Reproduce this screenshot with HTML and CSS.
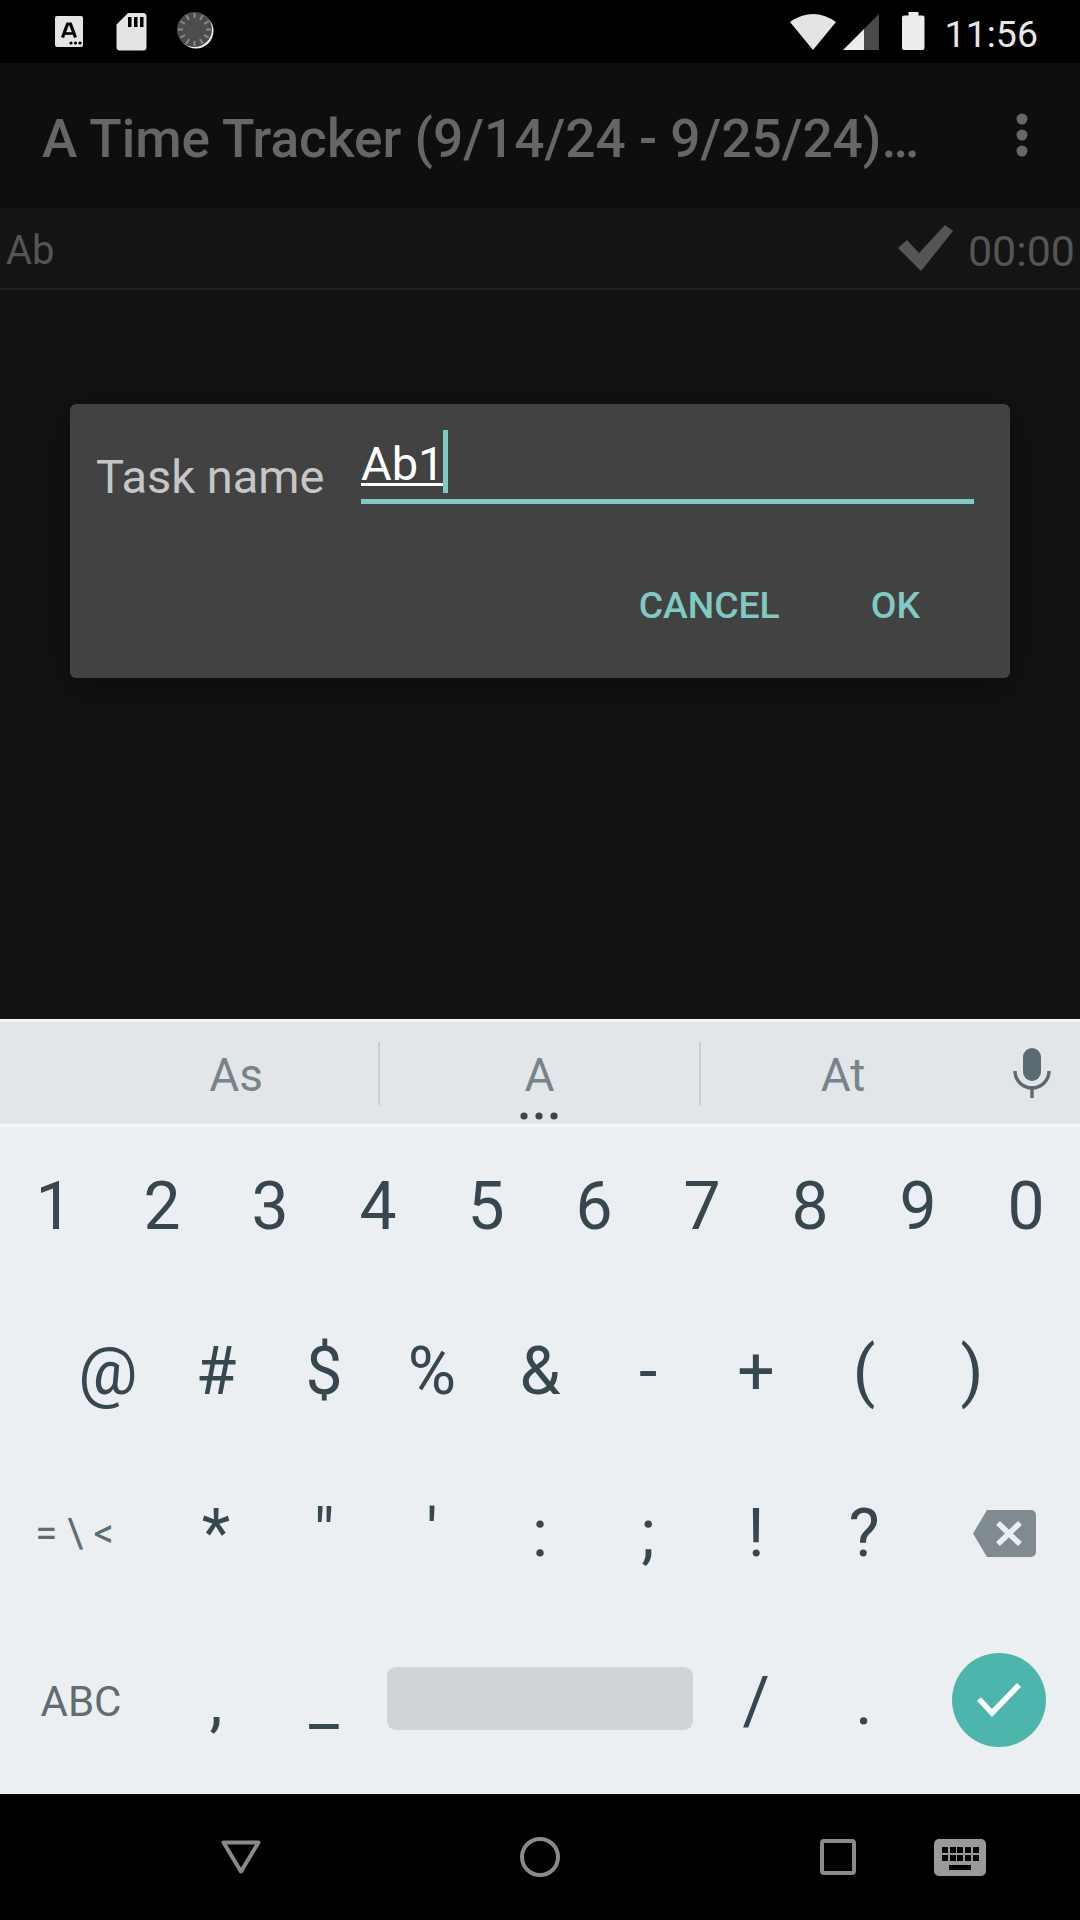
FILE: index.html
```html
<!DOCTYPE html>
<html lang="en">
<head>
<meta charset="utf-8">
<title>A Time Tracker</title>
<link rel="stylesheet" href="styles.css">
</head>
<body>
<div class="screen">
  <header class="status">
    <div class="status-left">
      <svg class="ic-a" width="28" height="31" viewBox="0 0 28 31"><rect width="28" height="31" rx="2" fill="#e4e4e4"/><path d="M7.500 21.500 L12.500 8 h3 L20.500 21.500" fill="none" stroke="#000" stroke-width="3.200"/><path d="M10 17.500 h8" stroke="#000" stroke-width="2.600"/><circle cx="16" cy="27" r="1.600" fill="#000"/><circle cx="20.500" cy="27" r="1.600" fill="#000"/><circle cx="25" cy="27" r="1.600" fill="#000"/></svg>
      <svg class="ic-sd" width="31" height="38" viewBox="0 0 31 38"><path d="M12 0 H27 a3.500 3.500 0 0 1 3.500 3.500 V34 a3.500 3.500 0 0 1 -3.500 3.500 H4 a3.500 3.500 0 0 1 -3.500 -3.500 V11.500 Z" fill="#e4e4e4"/><path d="M12 4 h3.500 v10 h-3.500 z M18 4 h3.500 v10 h-3.500 z M24 4 h3.500 v10 h-3.500 z" fill="#000"/></svg>
      <svg class="ic-spin" width="38" height="38" viewBox="0 0 38 38"><circle cx="19" cy="19" r="17.500" fill="#f0f0f0"/><circle cx="17.500" cy="17.500" r="17.500" fill="#4c4c4c"/><g stroke="#8a8a8a" stroke-width="2"><path d="M17.500 1 V6"/><path d="M17.500 29 V34"/><path d="M1 17.500 H6"/><path d="M29 17.500 H34"/><path d="M25.700 3.300 L23 8"/><path d="M9.300 3.300 L12 8"/><path d="M3.300 9.300 L8 12"/><path d="M31.700 9.300 L27 12"/><path d="M3.300 25.700 L8 23"/><path d="M31.700 25.700 L27 23"/><path d="M9.300 31.700 L12 27"/><path d="M25.700 31.700 L23 27"/></g></svg>
    </div>
    <div class="status-right">
      <svg class="ic-wifi" width="46" height="37" viewBox="0 0 46 37"><path d="M0 9 Q23 -7 46 9 L23 37 Z" fill="#e4e4e4"/></svg>
      <svg class="ic-signal" width="36" height="36" viewBox="0 0 36 36"><path d="M36 0 V36 H21 V15 Z" fill="#4a4a4a"/><path d="M21 15 V36 H0 Z" fill="#ececec"/></svg>
      <svg class="ic-batt" width="23" height="38" viewBox="0 0 23 38"><path d="M6.500 0 h10 v3.500 h4 a2 2 0 0 1 2 2 V36 a2 2 0 0 1 -2 2 H2 a2 2 0 0 1 -2 -2 V5.500 a2 2 0 0 1 2 -2 h4.500 Z" fill="#ececec"/></svg>
      <span class="clock">11:56</span>
    </div>
  </header>

  <div class="appbar">
    <h1 class="title">A Time Tracker (9/14/24 - 9/25/24)…</h1>
    <svg class="ic-more" width="12" height="44" viewBox="0 0 12 44"><circle cx="6" cy="6" r="5.500" fill="#666"/><circle cx="6" cy="22" r="5.500" fill="#666"/><circle cx="6" cy="38" r="5.500" fill="#666"/></svg>
  </div>

  <div class="task-row">
    <span class="task-name">Ab</span>
    <svg class="ic-check" width="56" height="47" viewBox="0 0 56 47"><path d="M0 23 L9 15 L21 28 L47 0 L55 6 L23 46 Z" fill="#555"/></svg>
    <span class="task-time">00:00</span>
  </div>

  <main class="content">
    <section class="dialog">
      <div class="dialog-body">
        <label class="field-label">Task name</label>
        <div class="field"><span class="composing">Ab1</span><span class="cursor"></span></div>
      </div>
      <div class="dialog-actions">
        <button class="action cancel">CANCEL</button>
        <button class="action ok">OK</button>
      </div>
    </section>
  </main>

  <section class="keyboard">
    <div class="strip">
      <div class="sug">As</div>
      <div class="sep"></div>
      <div class="sug sug-mid">A<svg class="more-dots" width="38" height="8" viewBox="0 0 38 8"><circle cx="4" cy="4" r="3.600" fill="#37474f"/><circle cx="19" cy="4" r="3.600" fill="#37474f"/><circle cx="34" cy="4" r="3.600" fill="#37474f"/></svg></div>
      <div class="sep"></div>
      <div class="sug sug-last">At</div>
      <svg class="ic-mic" width="38" height="50" viewBox="0 0 38 50"><rect x="10" y="0" width="18" height="33" rx="9" fill="#5b6b73"/><path d="M2 23 a17 17 0 0 0 34 0" fill="none" stroke="#5b6b73" stroke-width="3.400"/><path d="M19 38 V50" stroke="#5b6b73" stroke-width="3.400"/></svg>
    </div>
    <div class="keys">
      <div class="row row-digits">
        <span class="key">1</span><span class="key">2</span><span class="key">3</span><span class="key">4</span><span class="key">5</span><span class="key">6</span><span class="key">7</span><span class="key">8</span><span class="key">9</span><span class="key">0</span>
      </div>
      <div class="row row-sym">
        <span class="key">@</span><span class="key">#</span><span class="key">$</span><span class="key">%</span><span class="key">&amp;</span><span class="key">-</span><span class="key">+</span><span class="key">(</span><span class="key">)</span>
      </div>
      <div class="row row-punct">
        <span class="key key-fn key-small">= \ &lt;</span><span class="key">*</span><span class="key">"</span><span class="key">'</span><span class="key">:</span><span class="key">;</span><span class="key">!</span><span class="key">?</span>
        <span class="key"><svg class="ic-back" width="63" height="47" viewBox="0 0 63 47"><path d="M14 0 H58 a5 5 0 0 1 5 5 V42 a5 5 0 0 1 -5 5 H14 L0 23.500 Z" fill="#7f8b90"/><path d="M25 13 L47 34 M47 13 L25 34" stroke="#eceff2" stroke-width="5.500"/></svg></span>
      </div>
      <div class="row row-bottom">
        <span class="key key-fn">ABC</span><span class="key">,</span><span class="key">_</span>
        <span class="key key-space"><span class="spacebar"></span></span>
        <span class="key">/</span><span class="key">.</span>
        <span class="key key-enter"><span class="enter"><svg width="46" height="36" viewBox="0 0 46 36"><path d="M3 17 L16 31 L43 3" fill="none" stroke="#fff" stroke-width="5.500"/></svg></span></span>
      </div>
    </div>
  </section>

  <nav class="navbar">
    <svg class="nav-back" width="40" height="34" viewBox="0 0 40 34"><path d="M2.500 2.500 H37.500 L20 31.500 Z" fill="none" stroke="#8a8a8a" stroke-width="4" stroke-linejoin="round"/></svg>
    <svg class="nav-home" width="40" height="40" viewBox="0 0 40 40"><circle cx="20" cy="20" r="18" fill="none" stroke="#8a8a8a" stroke-width="4"/></svg>
    <svg class="nav-recent" width="36" height="36" viewBox="0 0 36 36"><rect x="2" y="2" width="32" height="32" rx="2" fill="none" stroke="#8a8a8a" stroke-width="4"/></svg>
    <svg class="nav-kbd" width="52" height="37" viewBox="0 0 52 37"><rect width="52" height="37" rx="5" fill="#999"/><g fill="#000"><rect x="8" y="8" width="6" height="6"/><rect x="16" y="8" width="6" height="6"/><rect x="23" y="8" width="6" height="6"/><rect x="31" y="8" width="6" height="6"/><rect x="39" y="8" width="6" height="6"/><rect x="8" y="16" width="6" height="6"/><rect x="16" y="16" width="6" height="6"/><rect x="23" y="16" width="6" height="6"/><rect x="31" y="16" width="6" height="6"/><rect x="39" y="16" width="6" height="6"/><rect x="15" y="26" width="22" height="5"/></g></svg>
  </nav>
</div>
</body>
</html>
```
FILE: styles.css
```css
* { box-sizing: border-box; }
html, body { margin: 0; padding: 0; background: #000; }
body { font-family: Roboto, "Noto Sans", sans-serif; }
.screen { width: 1080px; height: 1920px; display: flex; flex-direction: column; overflow: hidden; }

.status { height: 63px; background: #000; display: flex; justify-content: space-between; align-items: flex-start; flex: none; }
.status-left { display: flex; align-items: flex-start; padding-left: 55px; }
.ic-a { margin-top: 16px; }
.ic-sd { margin: 13px 0 0 33px; }
.ic-spin { margin: 12px 0 0 30px; }
.status-right { display: flex; align-items: flex-start; padding-right: 42px; }
.ic-wifi { margin-top: 13px; }
.ic-signal { margin: 14px 0 0 7px; }
.ic-batt { margin: 12px 0 0 23px; }
.clock { margin-left: 20px; font-size: 37.500px; line-height: 44px; margin-top: 12px; color: #e6e6e6; }

.appbar { height: 145px; flex: none; background: #0e0e0e; display: flex; align-items: center; justify-content: space-between; padding: 0 52px 0 42px; }
.title { margin: 6px 0 0; font-size: 53.200px; font-weight: 500; color: #666; white-space: nowrap; line-height: 60px; }
.ic-more { margin-top: -1px; }

.task-row { height: 82px; flex: none; background: #141414; border-bottom: 2px solid #1f1f1f; display: flex; align-items: center; padding: 0 5px 0 6px; }
.task-name { font-size: 40px; color: #555; flex: 1; margin-top: 5px; }
.ic-check { margin-right: 14px; margin-top: 0; }
.task-time { font-size: 43px; color: #555; margin-top: 5px; }

.content { flex: 1; background: #121212; padding: 114px 70px 0; }
.dialog { height: 274px; background: #424242; border-radius: 6px; box-shadow: 0 8px 40px rgba(0,0,0,.35); display: flex; flex-direction: column; }
.dialog-body { display: flex; align-items: flex-start; padding: 26px 36px 0 26px; }
.field-label { font-size: 47px; line-height: 56px; color: #c6c6c6; margin-top: 19px; width: 265px; flex: none; }
.field { flex: 1; height: 74px; border-bottom: 5px solid #7fcac2; display: flex; align-items: flex-start; }
.composing { font-size: 47px; line-height: 38px; padding-top: 15px; color: #fff; border-bottom: 3px solid #fff; }
.cursor { width: 5px; height: 63px; background: #7fcac2; margin-left: -1px; }
.dialog-actions { display: flex; justify-content: flex-end; padding: 78px 90px 0 0; gap: 91px; }
.action { background: none; border: 0; padding: 0; font: 500 37.300px/44px Roboto, sans-serif; color: #7fcac2; }

.keyboard { height: 775px; flex: none; background: #eceff2; border-top: 3px solid #f4f6f7; display: flex; flex-direction: column; color: #37474f; }
.strip { height: 105px; flex: none; background: #e2e6e9; border-bottom: 3px solid #f4f6f7; display: grid; grid-template-columns: 284px 2px 319px 2px 288px 1fr; padding-left: 94px; align-items: center; }
.sug { font-size: 46px; color: #78848a; text-align: center; position: relative; margin-top: 4px; }
.sug-last { padding-right: 4px; }
.sep { width: 2px; height: 63px; background: #c9cdd0; }
.more-dots { position: absolute; left: 140px; top: 64px; }
.ic-mic { justify-self: center; margin-left: -6px; }
.keys { flex: 1; display: grid; grid-template-rows: 160px 166px 166px 166px; align-content: start; }
.row { display: grid; align-items: center; font-size: 66px; }
.row-digits { grid-template-columns: repeat(10, 108px); }
.row-sym { grid-template-columns: repeat(9, 108px); padding: 4px 54px 0; }
.row-punct { grid-template-columns: 162px repeat(7, 108px) 162px; }
.row-punct .key { padding-bottom: 5px; }
.row-bottom { grid-template-columns: 162px 108px 108px 324px 108px 108px 162px; }
.key { display: flex; align-items: center; justify-content: center; line-height: 1; }
.key-fn { font-size: 42px; color: #5f6c72; }
.row-punct .key-small { font-size: 40px; padding-right: 13px; }
.ic-back { margin-left: 10px; }
.key-space { height: 63px; padding: 0 9px; align-items: stretch; margin-bottom: 8px; }
.key-enter { margin-bottom: 5px; }
.spacebar { flex: 1; background: #d0d4d7; border-radius: 9px; }
.enter { width: 94px; height: 94px; border-radius: 50%; background: #4db6ac; display: flex; align-items: center; justify-content: center; }

.navbar { height: 126px; flex: none; background: #000; display: flex; align-items: flex-start; padding: 46px 0 0 221px; }
.nav-home { margin: -3px 0 0 259px; }
.nav-recent { margin: -1px 0 0 260px; }
.nav-kbd { margin: -1px 0 0 78px; }
```
